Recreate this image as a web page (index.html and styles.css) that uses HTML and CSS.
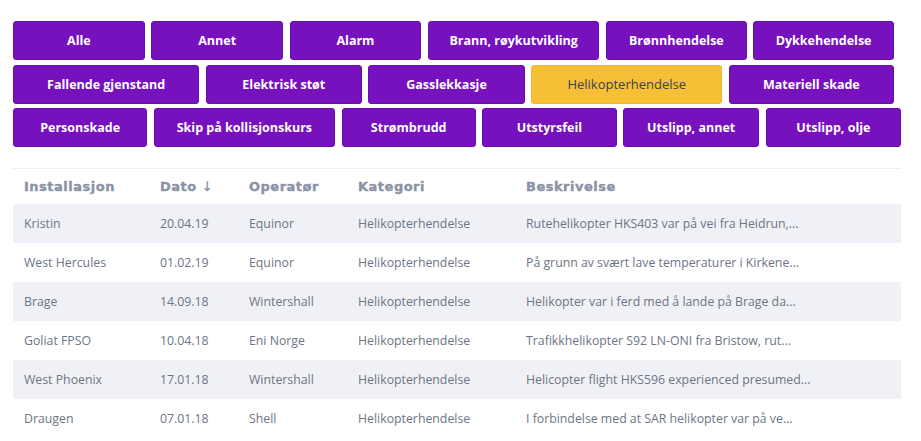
FILE: index.html
```html
<!DOCTYPE html>
<html lang="no">

<head>
  <meta charset="UTF-8">
  <meta name="viewport" content="width=device-width, initial-scale=1">
  <title>Hendelser</title>
  <link rel="stylesheet" href="styles.css">
</head>

<body>
  <main class="page">
    <!-- category filters -->
    <div class="filters">
      <div class="filters__row filters__row--first">
        <button type="button" class="filter">Alle</button>
        <button type="button" class="filter">Annet</button>
        <button type="button" class="filter">Alarm</button>
        <button type="button" class="filter">Brann, røykutvikling</button>
        <button type="button" class="filter">Brønnhendelse</button>
        <button type="button" class="filter">Dykkehendelse</button>
      </div>
      <div class="filters__row filters__row--second">
        <button type="button" class="filter">Fallende gjenstand</button>
        <button type="button" class="filter">Elektrisk støt</button>
        <button type="button" class="filter">Gasslekkasje</button>
        <button type="button" class="filter filter--active">Helikopterhendelse</button>
        <button type="button" class="filter">Materiell skade</button>
      </div>
      <div class="filters__row filters__row--third">
        <button type="button" class="filter">Personskade</button>
        <button type="button" class="filter">Skip på kollisjonskurs</button>
        <button type="button" class="filter">Strømbrudd</button>
        <button type="button" class="filter">Utstyrsfeil</button>
        <button type="button" class="filter">Utslipp, annet</button>
        <button type="button" class="filter">Utslipp, olje</button>
      </div>
    </div>

    <!-- incidents table -->
    <table class="incidents">
      <colgroup>
        <col class="incidents__col--installation">
        <col class="incidents__col--date">
        <col class="incidents__col--operator">
        <col class="incidents__col--category">
        <col>
      </colgroup>
      <thead>
        <tr>
          <th>Installasjon</th>
          <th>Dato <span class="sort-arrow">&#8595;</span></th>
          <th>Operatør</th>
          <th>Kategori</th>
          <th>Beskrivelse</th>
        </tr>
      </thead>
      <tbody>
        <tr>
          <td>Kristin</td>
          <td>20.04.19</td>
          <td>Equinor</td>
          <td>Helikopterhendelse</td>
          <td>Rutehelikopter HKS403 var på vei fra Heidrun,...</td>
        </tr>
        <tr>
          <td>West Hercules</td>
          <td>01.02.19</td>
          <td>Equinor</td>
          <td>Helikopterhendelse</td>
          <td>På grunn av svært lave temperaturer i Kirkene...</td>
        </tr>
        <tr>
          <td>Brage</td>
          <td>14.09.18</td>
          <td>Wintershall</td>
          <td>Helikopterhendelse</td>
          <td>Helikopter var i ferd med å lande på Brage da...</td>
        </tr>
        <tr>
          <td>Goliat FPSO</td>
          <td>10.04.18</td>
          <td>Eni Norge</td>
          <td>Helikopterhendelse</td>
          <td>Trafikkhelikopter S92 LN-ONI fra Bristow, rut...</td>
        </tr>
        <tr>
          <td>West Phoenix</td>
          <td>17.01.18</td>
          <td>Wintershall</td>
          <td>Helikopterhendelse</td>
          <td>Helicopter flight HKS596 experienced presumed...</td>
        </tr>
        <tr>
          <td>Draugen</td>
          <td>07.01.18</td>
          <td>Shell</td>
          <td>Helikopterhendelse</td>
          <td>I forbindelse med at SAR helikopter var på ve...</td>
        </tr>
      </tbody>
    </table>
  </main>
</body>

</html>
```

FILE: styles.css
```css
* {
  box-sizing: border-box;
  padding: 0;
  margin: 0;
}

body {
  font-family: "Open Sans", sans-serif;
  background-color: #fff;
  color: #6c7585;
}

.page {
  padding: 21px 20px 0 13px;
}

/* filter buttons */
.filters {
  display: flex;
  flex-direction: column;
  gap: 4.5px;
}

.filters__row {
  display: grid;
  column-gap: 6.5px;
}

.filters__row--first {
  width: 881px;
  grid-template-columns: 132fr 132fr 132fr 172fr 141fr 141fr;
}

.filters__row--second {
  width: 881px;
  grid-template-columns: 186fr 156fr 156fr 191fr 165fr;
}

.filters__row--third {
  width: 888px;
  grid-template-columns: 134fr 181fr 134fr 134fr 136fr 135fr;
}

.filter {
  height: 39px;
  font-family: "Open Sans", sans-serif;
  font-size: 12.5px;
  font-weight: 700;
  color: #fff;
  background-color: #7711bd;
  border: 1px solid #6a0ea9;
  border-radius: 3px;
  cursor: pointer;
  white-space: nowrap;
}

.filter--active {
  background-color: #f6bf36;
  border-color: #f0b72c;
  color: #3e4150;
  font-size: 13px;
  font-weight: 400;
}

/* table */
.incidents {
  width: 888px;
  margin-top: 21px;
  border-collapse: collapse;
  table-layout: fixed;
  border-top: 1px solid #eceef2;
}

.incidents__col--installation {
  width: 136px;
}

.incidents__col--date {
  width: 89px;
}

.incidents__col--operator {
  width: 109px;
}

.incidents__col--category {
  width: 168px;
}

.incidents th {
  height: 35px;
  padding: 0 11px;
  text-align: left;
  font-family: "DejaVu Sans", sans-serif;
  font-size: 13px;
  font-weight: 700;
  letter-spacing: 0.5px;
  -webkit-text-stroke: 0.35px #8a93a5;
  color: #8a93a5;
}

.sort-arrow {
  font-family: "DejaVu Sans", sans-serif;
  font-weight: 400;
}

.incidents td {
  height: 39px;
  padding: 0 11px;
  font-size: 12.3px;
  color: #6c7585;
  white-space: nowrap;
  overflow: hidden;
}

.incidents tbody tr:nth-child(odd) {
  background-color: #f0f1f6;
}
```
